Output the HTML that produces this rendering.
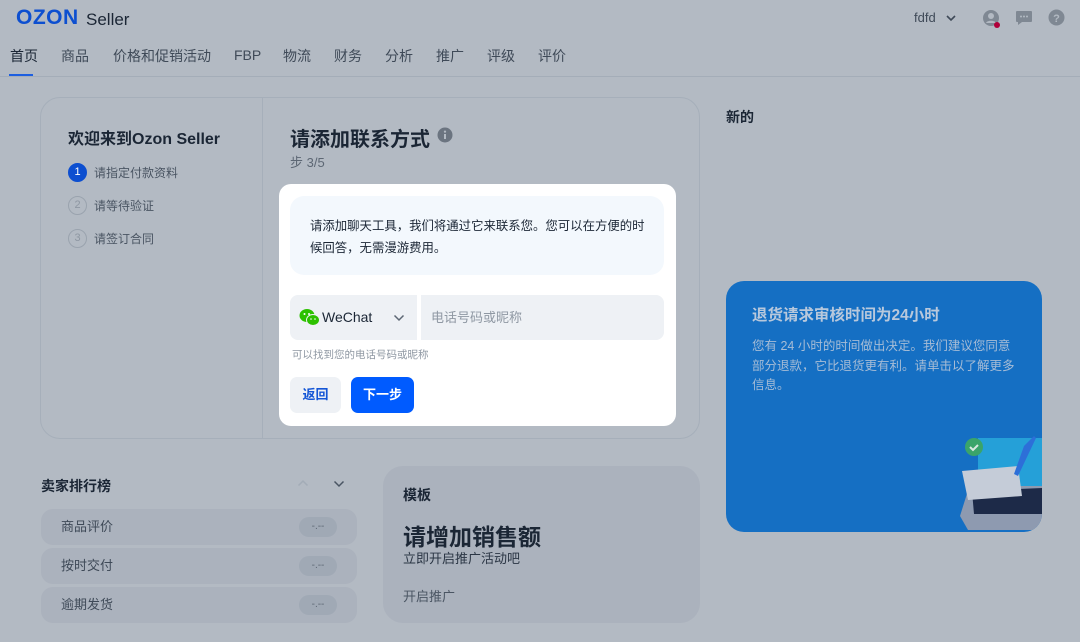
<!DOCTYPE html>
<html><head><meta charset="utf-8"><style>
*{box-sizing:border-box;margin:0;padding:0}
body{width:1080px;height:642px;overflow:hidden;background:#b3bac3;font-family:"Liberation Sans","Noto Sans CJK SC",sans-serif;color:#1b2635;position:relative}
.abs{position:absolute}
.nav span{position:absolute;top:46px;font-size:14px;color:#3f4a58}
.step{position:absolute;left:68px;font-size:12px;color:#4a5563;display:flex;align-items:center}
.step i{display:inline-block;width:19px;height:19px;border-radius:50%;border:1.5px solid #9aa3ae;color:#8e97a2;font-style:normal;font-size:11px;text-align:center;line-height:16px;margin-right:7px}
.row{position:absolute;left:41px;width:316px;height:36px;border-radius:12px;background:#abb2bd;font-size:13px;color:#3f4a58;padding-left:20px;line-height:36px}
.row b{position:absolute;right:20px;top:8px;width:38px;height:20px;border-radius:10px;background:#a0a9b5;font-weight:normal;font-size:10px;line-height:20px;text-align:center;color:#5d6774}
</style></head><body>
<div class="abs" style="left:16px;top:6px;font-size:21px;font-weight:bold;color:#0d4fd0;letter-spacing:0.5px">OZON</div>
<div class="abs" style="left:86px;top:10px;font-size:17px;color:#1b2635">Seller</div>
<div class="nav">
<span style="left:10px;color:#1b2635">首页</span><span style="left:61px">商品</span><span style="left:113px">价格和促销活动</span><span style="left:234px;top:47px">FBP</span><span style="left:283px">物流</span><span style="left:334px">财务</span><span style="left:385px">分析</span><span style="left:436px">推广</span><span style="left:487px">评级</span><span style="left:538px">评价</span>
</div>
<div class="abs" style="left:9px;top:74px;width:24px;height:2px;background:#1d5fe0"></div>
<div class="abs" style="left:0;top:76px;width:1080px;height:1px;background:#a4adb8"></div>
<div class="abs" style="left:914px;top:10px;font-size:13px;color:#3f4a58">fdfd</div>
<svg class="abs" style="left:945px;top:14px" width="12" height="8"><path d="M2 2l4 4 4-4" stroke="#3f4a58" stroke-width="1.6" fill="none"/></svg>
<svg class="abs" style="left:982px;top:9px" width="20" height="20"><circle cx="9" cy="9" r="8" fill="#7f8893"/><circle cx="9" cy="7" r="3" fill="#b3bac3"/><path d="M4 14c1-3 9-3 10 0" fill="#b3bac3"/><circle cx="15" cy="16" r="3" fill="#b0003a"/></svg>
<svg class="abs" style="left:1015px;top:10px" width="18" height="16"><path d="M2 1h14a1 1 0 0 1 1 1v9a1 1 0 0 1-1 1H7l-4 3v-3H2a1 1 0 0 1-1-1V2a1 1 0 0 1 1-1z" fill="#7f8893"/><circle cx="6" cy="6.5" r="1" fill="#b3bac3"/><circle cx="9" cy="6.5" r="1" fill="#b3bac3"/><circle cx="12" cy="6.5" r="1" fill="#b3bac3"/></svg>
<svg class="abs" style="left:1048px;top:9px" width="17" height="17"><circle cx="8.5" cy="8.5" r="8" fill="#7f8893"/><text x="8.5" y="13" font-size="11" font-weight="bold" fill="#b3bac3" text-anchor="middle" font-family="Liberation Sans">?</text></svg>

<div class="abs" style="left:40px;top:97px;width:660px;height:342px;border:1px solid #a6afba;border-radius:20px"></div>
<div class="abs" style="left:262px;top:98px;width:1px;height:340px;background:#a6afba"></div>
<div class="abs" style="left:68px;top:125px;font-size:16px;font-weight:bold">欢迎来到Ozon Seller</div>
<div class="step" style="top:163px"><i style="background:#0d4fd0;border-color:#0d4fd0;color:#fff">1</i>请指定付款资料</div>
<div class="step" style="top:196px"><i>2</i>请等待验证</div>
<div class="step" style="top:229px"><i>3</i>请签订合同</div>
<div class="abs" style="left:290px;top:123px;font-size:20px;font-weight:bold">请添加联系方式</div>
<svg class="abs" style="left:437px;top:127px" width="16" height="16"><circle cx="8" cy="8" r="7.5" fill="#6b7480"/><rect x="7" y="7" width="2" height="5" fill="#b3bac3"/><circle cx="8" cy="4.6" r="1.1" fill="#b3bac3"/></svg>
<div class="abs" style="left:290px;top:152px;font-size:13px;color:#5d6774">步 3/5</div>

<div class="abs" style="left:279px;top:184px;width:397px;height:242px;background:#fff;border-radius:12px">
 <div class="abs" style="left:11px;top:12px;width:374px;height:79px;background:#f3f8fd;border-radius:14px;padding:19px 20px;font-size:12.4px;line-height:22px;color:#1b2635;white-space:nowrap">请添加聊天工具，我们将通过它来联系您。您可以在方便的时<br>候回答，无需漫游费用。</div>
 <div class="abs" style="left:11px;top:111px;width:127px;height:45px;background:#eef1f5;border-radius:8px 0 0 8px"></div>
 <svg class="abs" style="left:20px;top:124px" width="21" height="19"><ellipse cx="8" cy="7.5" rx="7.5" ry="6.5" fill="#2dc100"/><ellipse cx="14" cy="12" rx="6.5" ry="5.5" fill="#2dc100" stroke="#eef1f5" stroke-width="1"/><circle cx="5.5" cy="6" r="1" fill="#fff"/><circle cx="10" cy="6" r="1" fill="#fff"/><circle cx="12" cy="11" r=".8" fill="#fff"/><circle cx="16" cy="11" r=".8" fill="#fff"/></svg>
 <div class="abs" style="left:43px;top:125px;font-size:14px;color:#1b2635">WeChat</div>
 <svg class="abs" style="left:114px;top:130px" width="12" height="8"><path d="M1.5 1.5l4.5 4.5 4.5-4.5" stroke="#5d6774" stroke-width="1.5" fill="none"/></svg>
 <div class="abs" style="left:142px;top:111px;width:243px;height:45px;background:#eef1f5;border-radius:0 8px 8px 0;padding-left:10px;line-height:45px;font-size:13px;color:#8f98a3">电话号码或昵称</div>
 <div class="abs" style="left:13px;top:163px;font-size:10.5px;color:#8f98a3">可以找到您的电话号码或昵称</div>
 <div class="abs" style="left:11px;top:193px;width:51px;height:36px;background:#eef1f5;border-radius:7px;text-align:center;line-height:36px;font-size:13px;font-weight:bold;color:#1456d6">返回</div>
 <div class="abs" style="left:72px;top:193px;width:63px;height:36px;background:#005bff;border-radius:7px;text-align:center;line-height:36px;font-size:13px;font-weight:bold;color:#fff">下一步</div>
</div>

<div class="abs" style="left:726px;top:107px;font-size:14px;font-weight:bold">新的</div>
<div class="abs" style="left:726px;top:281px;width:316px;height:251px;background:#156fc3;border-radius:18px;overflow:hidden">
 <div class="abs" style="left:26px;top:22px;font-size:15.5px;font-weight:bold;color:#b8c8dc">退货请求审核时间为24小时</div>
 <div class="abs" style="left:26px;top:56px;width:272px;font-size:12.5px;line-height:19.5px;color:#a6bcd6;white-space:nowrap">您有 24 小时的时间做出决定。我们建议您同意<br>部分退款，它比退货更有利。请单击以了解更多<br>信息。</div>
 <svg class="abs" style="left:222px;top:145px" width="94" height="106"><path d="M12 90 L22 58 L94 58 L94 104 L20 104 Z" fill="#8e9ab0"/><path d="M24 65 L94 62 L94 88 L26 88 Z" fill="#1d2a48"/><path d="M30 12 L94 12 L94 60 L30 60 Z" fill="#25a0d8"/><path d="M14 45 L70 40 L74 70 L20 74 Z" fill="#c5ccd8"/><path d="M76 20 L86 10 L88 12 L70 50 L66 48 Z" fill="#2d6fd8"/><circle cx="26" cy="21" r="9" fill="#3aa46a"/><path d="M22 21l3 3 5-5" stroke="#d8e8e0" stroke-width="2" fill="none"/></svg>
</div>

<div class="abs" style="left:41px;top:476px;font-size:14px;font-weight:bold">卖家排行榜</div>
<svg class="abs" style="left:297px;top:479px" width="12" height="8"><path d="M1.5 6.5l4.5-4.5 4.5 4.5" stroke="#a3acb7" stroke-width="1.5" fill="none"/></svg>
<svg class="abs" style="left:333px;top:480px" width="12" height="8"><path d="M1.5 1.5l4.5 4.5 4.5-4.5" stroke="#4a5563" stroke-width="1.5" fill="none"/></svg>
<div class="row" style="top:509px">商品评价<b>-.--</b></div>
<div class="row" style="top:548px">按时交付<b>-.--</b></div>
<div class="row" style="top:587px">逾期发货<b>-.--</b></div>
<div class="abs" style="left:383px;top:466px;width:317px;height:157px;background:#abb2bd;border-radius:20px">
 <div class="abs" style="left:20px;top:19px;font-size:14px;font-weight:bold">模板</div>
 <div class="abs" style="left:20px;top:52px;font-size:23px;font-weight:bold">请增加销售额</div>
 <div class="abs" style="left:20px;top:82px;font-size:13px;color:#2a3544">立即开启推广活动吧</div>
 <div class="abs" style="left:20px;top:120px;font-size:13px;color:#4a5563">开启推广</div>
</div>
</body></html>
